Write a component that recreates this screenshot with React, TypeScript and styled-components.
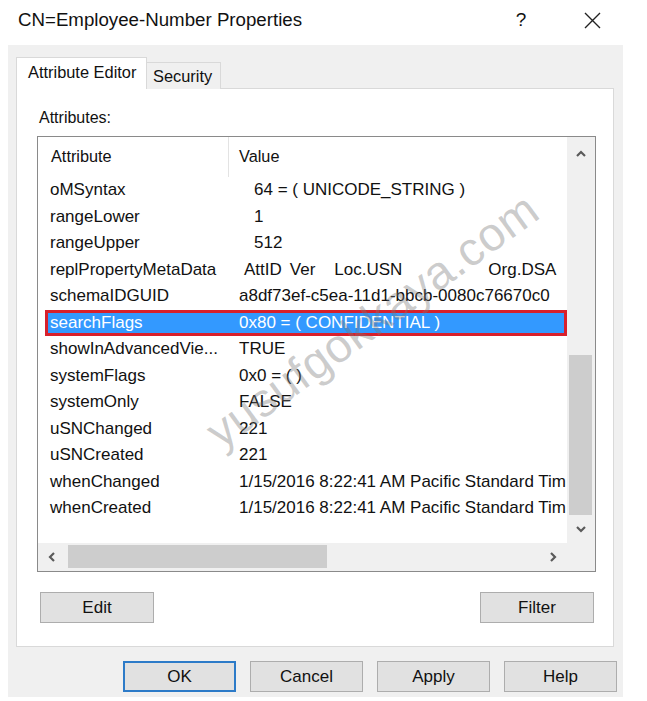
import React from 'react';
import styled, { createGlobalStyle } from 'styled-components';

const GlobalStyle = createGlobalStyle`
  html, body { margin: 0; padding: 0; background: #ffffff; }
  body { font-family: "Liberation Sans", Arial, sans-serif; color: #111; }
  * { box-sizing: border-box; }
`;

const Window = styled.div`
  position: relative;
  width: 647px;
  height: 701px;
  overflow: hidden;
  background: #ffffff;
`;

const TitleBar = styled.div`
  height: 45px;
  display: flex;
  align-items: center;
  padding-left: 18px;
  padding-bottom: 5px;
`;

const Title = styled.div`
  flex: 1;
  font-size: 18.7px;
  color: #111;
  white-space: nowrap;
`;

const Controls = styled.div`
  display: flex;
  gap: 25px;
  margin-right: 32px;
`;

const ControlButton = styled.div`
  width: 46px;
  height: 24px;
  display: flex;
  align-items: center;
  justify-content: center;
  font-size: 19px;
  color: #111;
`;

const Body = styled.div`
  margin-left: 8px;
  width: 615px;
  height: 652px;
  background: #f0f0f0;
  padding: 12px 9px 0 8px;
  display: flex;
  flex-direction: column;
`;

const TabStrip = styled.div`
  display: flex;
  align-items: flex-end;
  height: 32px;
  margin-bottom: -1px;
  position: relative;
  z-index: 1;
`;

const Tab = styled.div<{ $active?: boolean }>`
  display: flex;
  align-items: center;
  font-size: 16.4px;
  color: #111;
  border: 1px solid #d9d9d9;
  border-bottom: none;
  ${(p) =>
    p.$active
      ? `
    width: 131px;
    height: 32px;
    background: #ffffff;
    padding: 0 0 2px 11px;
  `
      : `
    width: 74px;
    height: 27px;
    background: #f0f0f0;
    border-left: none;
    padding: 0 0 0 6px;
  `}
`;

const Panel = styled.div`
  width: 598px;
  height: 559px;
  background: #ffffff;
  border: 1px solid #d9d9d9;
  padding: 0 17px 0 20px;
  display: flex;
  flex-direction: column;
`;

const Label = styled.div`
  margin-top: 19px;
  height: 20px;
  line-height: 20px;
  padding-left: 2px;
  font-size: 16px;
`;

const ListBox = styled.div`
  margin-top: 8px;
  height: 436px;
  border: 1px solid #8a8a8a;
  display: grid;
  grid-template-columns: 1fr 28px;
  grid-template-rows: 1fr 28px;
`;

const Content = styled.div`
  background: #ffffff;
  overflow: hidden;
`;

const HeaderRow = styled.div`
  display: grid;
  grid-template-columns: 191px 1fr;
  height: 40px;
  font-size: 16.3px;
`;

const HeaderCell = styled.div<{ $divider?: boolean }>`
  display: flex;
  align-items: center;
  padding-left: ${(p) => (p.$divider ? '13px' : '10px')};
  border-right: ${(p) => (p.$divider ? '1px solid #e3e3e3' : 'none')};
  padding-bottom: 1px;
`;

const Row = styled.div<{ $selected?: boolean }>`
  position: relative;
  isolation: isolate;
  display: grid;
  grid-template-columns: 191px 1fr;
  height: 26.5px;
  font-size: 17px;
  color: ${(p) => (p.$selected ? '#ffffff' : '#111')};
  ${(p) =>
    p.$selected &&
    `
    &::before {
      content: '';
      position: absolute;
      left: 7px;
      right: 0;
      top: 0;
      bottom: 0;
      background: #3399ff;
      border: 3px solid #d8202c;
      z-index: -1;
    }
  `}
`;

const NameCell = styled.div`
  display: flex;
  align-items: center;
  padding-left: 12px;
  white-space: nowrap;
  overflow: hidden;
`;

const ValueCell = styled.div<{ $indent?: number }>`
  display: flex;
  align-items: center;
  padding-left: ${(p) => 10 + (p.$indent || 0)}px;
  white-space: nowrap;
  overflow: hidden;
`;

const MetaPart = styled.span<{ $gap: number }>`
  margin-left: ${(p) => p.$gap}px;
`;

const VScroll = styled.div`
  background: #f0f0f0;
  display: flex;
  flex-direction: column;
`;

const HScroll = styled.div`
  background: #f0f0f0;
  display: flex;
  align-items: center;
`;

const Corner = styled.div`
  background: #f0f0f0;
`;

const ArrowBox = styled.div<{ $tall?: number }>`
  width: 28px;
  height: ${(p) => p.$tall || 28}px;
  flex: none;
  display: flex;
  align-items: center;
  justify-content: center;
`;

const VTrack = styled.div`
  flex: 1;
  display: flex;
  flex-direction: column;
  justify-content: flex-end;
`;

const VThumb = styled.div`
  height: 160px;
  margin: 0 3px 0 2px;
  background: #cdcdcd;
`;

const HTrack = styled.div`
  flex: 1;
  height: 100%;
  display: flex;
  align-items: center;
  padding: 0 0 1px 2px;
`;

const HThumb = styled.div`
  width: 259px;
  height: 23px;
  background: #cdcdcd;
`;

const ButtonRow = styled.div`
  margin-top: 20px;
  display: flex;
  justify-content: space-between;
  padding: 0 2px 0 3px;
`;

const Button = styled.div<{ $default?: boolean }>`
  width: ${(p) => (p.$default ? 113 : 114)}px;
  height: 31px;
  display: flex;
  align-items: center;
  justify-content: center;
  background: #e1e1e1;
  border: ${(p) => (p.$default ? '2px solid #2d7bc8' : '1px solid #adadad')};
  font-size: 17px;
  color: #111;
`;

const FooterButton = styled(Button)`
  width: 113px;
`;

const Footer = styled.div`
  margin-top: 14px;
  margin-right: -3px;
  display: flex;
  justify-content: flex-end;
  gap: 14px;
`;

const Watermark = styled.div`
  position: absolute;
  left: 372px;
  top: 320px;
  transform: translate(-50%, -50%) rotate(-36deg);
  font-size: 47px;
  color: rgba(120, 120, 120, 0.38);
  white-space: nowrap;
  pointer-events: none;
  letter-spacing: 0.5px;
`;

const Chevron = ({ dir }: { dir: 'up' | 'down' | 'left' | 'right' }) => {
  const pts: Record<string, string> = {
    up: '1,7 5,3 9,7',
    down: '1,3 5,7 9,3',
    left: '7,1 3,5 7,9',
    right: '3,1 7,5 3,9',
  };
  return (
    <svg width="10" height="10" viewBox="0 0 10 10">
      <polyline points={pts[dir]} fill="none" stroke="#5a5a5a" strokeWidth="2.2" />
    </svg>
  );
};

const CloseIcon = () => (
  <svg width="17" height="17" viewBox="0 0 17 17">
    <path d="M1 1 L16 16 M16 1 L1 16" stroke="#222" strokeWidth="1.4" />
  </svg>
);

type Attr = { name: string; value?: string; indent?: number; selected?: boolean; meta?: boolean };

const rows: Attr[] = [
  { name: 'oMSyntax', value: '64 = ( UNICODE_STRING )', indent: 15 },
  { name: 'rangeLower', value: '1', indent: 15 },
  { name: 'rangeUpper', value: '512', indent: 15 },
  { name: 'replPropertyMetaData', meta: true, indent: 5 },
  { name: 'schemaIDGUID', value: 'a8df73ef-c5ea-11d1-bbcb-0080c76670c0' },
  { name: 'searchFlags', value: '0x80 = ( CONFIDENTIAL )', selected: true },
  { name: 'showInAdvancedVie...', value: 'TRUE' },
  { name: 'systemFlags', value: '0x0 = ( )' },
  { name: 'systemOnly', value: 'FALSE' },
  { name: 'uSNChanged', value: '221' },
  { name: 'uSNCreated', value: '221' },
  { name: 'whenChanged', value: '1/15/2016 8:22:41 AM Pacific Standard Tim' },
  { name: 'whenCreated', value: '1/15/2016 8:22:41 AM Pacific Standard Tim' },
];

export default function App() {
  return (
    <Window>
      <GlobalStyle />
      <TitleBar>
        <Title>CN=Employee-Number Properties</Title>
        <Controls>
          <ControlButton>?</ControlButton>
          <ControlButton>
            <CloseIcon />
          </ControlButton>
        </Controls>
      </TitleBar>
      <Body>
        <TabStrip>
          <Tab $active>Attribute Editor</Tab>
          <Tab>Security</Tab>
        </TabStrip>
        <Panel>
          <Label>Attributes:</Label>
          <ListBox>
            <Content>
              <HeaderRow>
                <HeaderCell $divider>Attribute</HeaderCell>
                <HeaderCell>Value</HeaderCell>
              </HeaderRow>
              {rows.map((r) => (
                <Row key={r.name} $selected={r.selected}>
                  <NameCell>{r.name}</NameCell>
                  <ValueCell $indent={r.indent}>
                    {r.meta ? (
                      <>
                        <MetaPart $gap={0}>AttID</MetaPart>
                        <MetaPart $gap={8}>Ver</MetaPart>
                        <MetaPart $gap={19}>Loc.USN</MetaPart>
                        <MetaPart $gap={86}>Org.DSA</MetaPart>
                      </>
                    ) : (
                      r.value
                    )}
                  </ValueCell>
                </Row>
              ))}
            </Content>
            <VScroll>
              <ArrowBox $tall={34}>
                <Chevron dir="up" />
              </ArrowBox>
              <VTrack>
                <VThumb />
              </VTrack>
              <ArrowBox>
                <Chevron dir="down" />
              </ArrowBox>
            </VScroll>
            <HScroll>
              <ArrowBox>
                <Chevron dir="left" />
              </ArrowBox>
              <HTrack>
                <HThumb />
              </HTrack>
              <ArrowBox>
                <Chevron dir="right" />
              </ArrowBox>
            </HScroll>
            <Corner />
          </ListBox>
          <ButtonRow>
            <Button>Edit</Button>
            <Button>Filter</Button>
          </ButtonRow>
        </Panel>
        <Footer>
          <FooterButton $default>OK</FooterButton>
          <FooterButton>Cancel</FooterButton>
          <FooterButton>Apply</FooterButton>
          <FooterButton>Help</FooterButton>
        </Footer>
      </Body>
      <Watermark>yusufgokkaya.com</Watermark>
    </Window>
  );
}
